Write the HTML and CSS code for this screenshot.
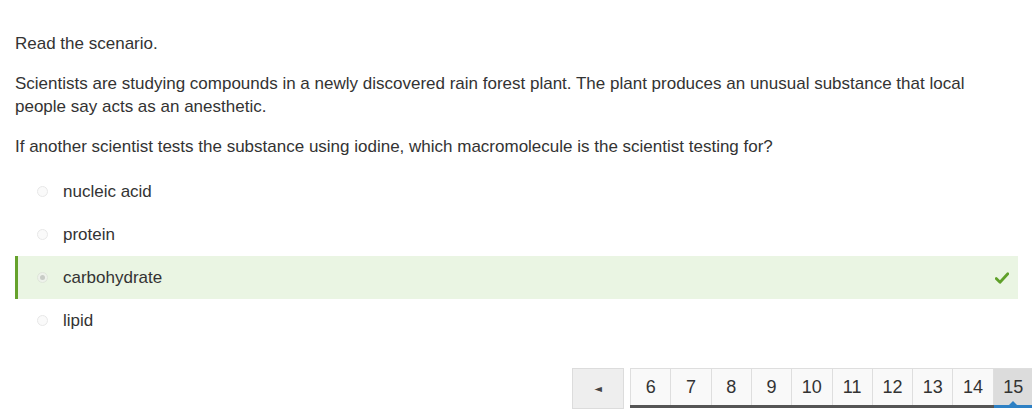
FILE: index.html
```html
<!DOCTYPE html>
<html>
<head>
<meta charset="utf-8">
<link rel="stylesheet" href="styles.css">
</head>
<body>
<div class="page">
  <div class="question">
    <p>Read the scenario.</p>
    <p>Scientists are studying compounds in a newly discovered rain forest plant. The plant produces an unusual substance that local people say acts as an anesthetic.</p>
    <p class="last">If another scientist tests the substance using iodine, which macromolecule is the scientist testing for?</p>
  </div>
  <ul class="options">
    <li class="option"><span class="radio"></span><span class="label">nucleic acid</span></li>
    <li class="option"><span class="radio"></span><span class="label">protein</span></li>
    <li class="option correct"><span class="radio"><span class="dot"></span></span><span class="label">carbohydrate</span>
      <svg class="check" width="14" height="12" viewBox="0 0 14 12"><path d="M1.2 6.6 L5 10.2 L12.8 1.8" fill="none" stroke="#5fa02a" stroke-width="2.8" stroke-linecap="round" stroke-linejoin="round"/></svg>
    </li>
    <li class="option"><span class="radio"></span><span class="label">lipid</span></li>
  </ul>
  <div class="pager">
    <button class="prev">&#9668;</button>
    <div class="pages">
      <span class="pg">6</span><span class="pg">7</span><span class="pg">8</span><span class="pg">9</span><span class="pg">10</span><span class="pg">11</span><span class="pg">12</span><span class="pg">13</span><span class="pg">14</span><span class="pg current">15</span>
    </div>
  </div>
</div>
</body>
</html>
```
FILE: styles.css
```css
html, body {
  margin: 0;
  padding: 0;
  background: #fff;
}
body {
  font-family: "Liberation Sans", Arial, sans-serif;
  color: #333;
  font-size: 17px;
  width: 1032px;
  height: 410px;
  overflow: hidden;
}
.page {
  padding-top: 32px;
}
.question {
  padding: 0 15px;
}
.question p {
  margin: 0 0 17px;
  line-height: 23px;
}
.question p.last {
  margin-bottom: 12px;
}
.options {
  list-style: none;
  margin: 0 14px 0 15px;
  padding: 0;
}
.option {
  height: 43px;
  display: flex;
  align-items: center;
  padding-left: 19px;
  border-left: 3px solid transparent;
  box-sizing: border-box;
}
.option.correct {
  background: #eaf5e3;
  border-left-color: #66a22c;
}
.radio {
  width: 11px;
  height: 11px;
  border-radius: 50%;
  border: 1px solid #e8e8e8;
  background: #fafafa;
  box-sizing: border-box;
  display: flex;
  align-items: center;
  justify-content: center;
  flex: none;
}
.correct .radio {
  border-color: #dfe6da;
  background: #eef2eb;
}
.dot {
  width: 5px;
  height: 5px;
  border-radius: 50%;
  background: #c8ccc6;
}
.label {
  margin-left: 15px;
  flex: 1;
}
.check {
  margin-right: 9px;
}
.pager {
  margin-top: 26px;
  display: flex;
  justify-content: flex-end;
  align-items: flex-start;
}
.prev {
  width: 52px;
  height: 41px;
  border: 1px solid #dcdcdc;
  background: #eeeeee;
  color: #444;
  font-size: 10px;
  padding: 0;
  margin-right: 6px;
  font-family: "DejaVu Sans", sans-serif;
}
.pages {
  display: flex;
  border-bottom: 3px solid #555;
  margin-right: -1px;
}
.pg {
  width: 40.3px;
  height: 37px;
  box-sizing: border-box;
  border: 1px solid #dedede;
  border-bottom: none;
  border-right: none;
  background: #f9f9f9;
  font-size: 18px;
  color: #333;
  display: flex;
  align-items: center;
  justify-content: center;
  position: relative;
}
.pg.current {
  background: #dcdcdc;
}
.pg.current::after {
  content: "";
  position: absolute;
  left: 0;
  right: 0;
  bottom: -3px;
  height: 3px;
  background: #2d80c4;
}
.pg.current::before {
  content: "";
  position: absolute;
  left: 50%;
  bottom: 0;
  margin-left: -4px;
  border-left: 4px solid transparent;
  border-right: 4px solid transparent;
  border-bottom: 4px solid #2d80c4;
  z-index: 1;
}
```
